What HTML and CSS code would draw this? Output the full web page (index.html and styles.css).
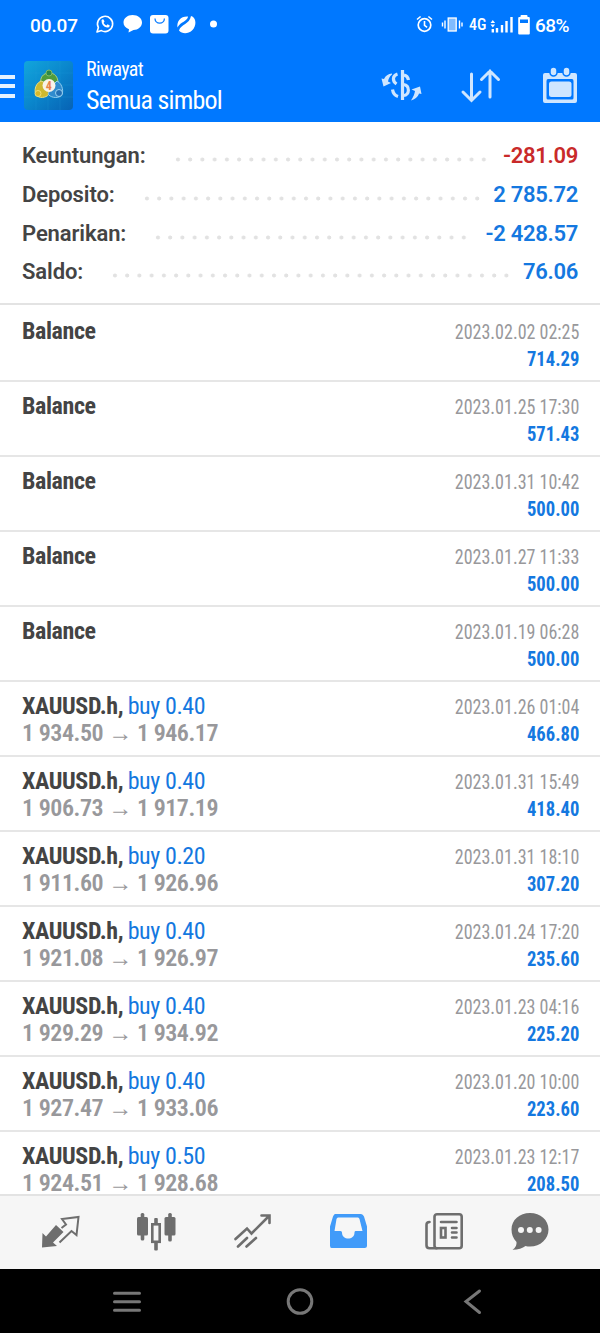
FILE: index.html
```html
<!DOCTYPE html>
<html lang="id">
<head>
    <meta charset="UTF-8" />
    <title>Riwayat</title>
    <link rel="stylesheet" href="styles.css">
</head>
<body>
    <div class="phone">
        <div class="status">
            <span class="clock">00.07</span>
            <svg class="notif" width="126" height="22" viewBox="0 0 126 22" fill="#fff">
                <path d="M2 19 L3.4 14.6 A7.6 7.6 0 1 1 6.4 17.6 Z" fill="none" stroke="#fff" stroke-width="1.6" stroke-linejoin="round"/>
                <path d="M6.500 7.200 q1.600-2 2.400 0 l.6 1.400 -.9 1.300 q1 1.800 2.800 2.500 l1.200-1.200 2.200 1.200 q-.2 2.400-2.700 2.200 Q6.500 13.400 6.500 7.200z"/>
                <path d="M37.500 2 C43 2 47 5.200 47 9.500 S43 17 38.500 17 L33.500 19.500 L34 16.300 C30.500 15 28.500 12.500 28.500 9.500 C28.500 5.200 32.500 2 37.500 2z"/>
                <rect x="55" y="2" width="18.500" height="18.500" rx="3"/>
                <path d="M60 5.500 a4.700 4.700 0 0 0 9.400 0" fill="none" stroke="#0a7cff" stroke-width="1.300"/>
                <path d="M82.500 14.500 C81.500 8 86 3 93 3.500 C93 8 85 9 82.500 14.500z"/>
                <path d="M84 17.500 C86 11 94.500 11.500 96 3 C101.500 4.500 102 13 97 17.500 C93 21 87 21 84 17.500z"/>
                <circle cx="118.500" cy="11" r="3.500"/>
            </svg>
            <svg class="signals" width="120" height="22" viewBox="0 0 120 22" fill="none" stroke="#fff">
                <circle cx="9.500" cy="12" r="6.300" stroke-width="1.700"/>
                <path d="M9.500 8v4.300l2.600 2M2 6.500l3.600-3M17 6.500l-3.600-3" stroke-width="1.600"/>
                <rect x="33.200" y="5" width="8" height="13" fill="#80bcff" stroke-width="1.300"/>
                <path d="M30 7.500v8M44.500 7.500v8M27.500 9.500v4M47 9.500v4" stroke-width="1.400"/>
                <text class="net" x="54" y="17">4G</text>
                <path d="M82 15v4.500M87 12v7.500M91.500 8v11.500M96.500 4v15.500" stroke-width="2.400"/>
                <path d="M75.500 10l2.300-3 2.300 3zM75.500 11.500l2.300 3 2.300-3z" fill="#fff" stroke="none"/>
                <path d="M77.800 16v3.500" stroke-width="2.400"/>
                <path d="M106.500 3h5v2h2.300v15.500h-9.600V5h2.300z" fill="#fff" stroke-width="2" stroke-linejoin="round"/>
                <rect x="105" y="6.500" width="8" height="3.500" fill="#0078ff" stroke="none"/>
            </svg>
            <span class="battery">68%</span>
        </div>
        <header class="header">
            <div class="menu"><i></i><i></i><i></i></div>
            <svg class="logo" width="49" height="49" viewBox="0 0 49 49">
                <defs>
                    <linearGradient id="sky" x1="0" y1="0" x2="1" y2="1">
                        <stop offset="0" stop-color="#12a6dc"/><stop offset=".5" stop-color="#0a86cc"/><stop offset="1" stop-color="#0762b4"/>
                    </linearGradient>
                </defs>
                <rect width="49" height="49" rx="4" fill="url(#sky)"/>
                <path d="M0 12h49M0 24h49M0 36h49M12 0v49M24 0v49M36 0v49" stroke="#2aa0dc" stroke-width=".5" opacity=".4"/>
                <path d="M25 12C19 12 15.500 17 17 23L25 25L34 22C34 16 31 12 25 12z" fill="#4f9c3c" stroke="#a9cf7c"/>
                <path d="M17 20C10 23 9 34 15 36C20 37.500 25 35 26 31L22 22z" fill="#cdb92f" stroke="#e6dd83"/>
                <path d="M33 20C39 23 40 32 37 35C32 38 26 36 24 33L28 25z" fill="#2f8bce" stroke="#8fcdee"/>
                <circle cx="25" cy="12" r="3" fill="#2c8748" stroke="#7dbb66"/>
                <circle cx="14" cy="32.500" r="3" fill="#d9b92a" stroke="#efe07a"/>
                <circle cx="35" cy="32" r="3.500" fill="#226fb4" stroke="#9ad3f2"/>
                <circle cx="25" cy="24.500" r="6.500" fill="#f8f3e8"/>
                <text class="four" x="21.800" y="29">4</text>
            </svg>
            <div class="titles">
                <div class="sub">Riwayat</div>
                <div class="title">Semua simbol</div>
            </div>
            <svg class="actions" width="200" height="40" viewBox="0 0 200 40" fill="none" stroke="#cfe6ff">
                <path d="M22.500 4v30" stroke-width="3.200"/>
                <path d="M17.500 8c-5 1.500-5.500 7-1 10M12.500 23.500c.5 3.500 2.500 6 5.500 7M24 9c2.500.5 4 2 4.500 5M23.500 18.500c6.500 1 6.500 10.500 0 11" stroke-width="3.200"/>
                <path d="M12 7.500c-4 .5-6.500 2-8 5.500l-2.500-.5 2 8 7.500-3.500-3-1.500c.5-3 1.500-5 4-7z" fill="#cfe6ff" stroke="none"/>
                <path d="M31 34.500c3.500-1 7-3.500 8-7l2.500.5-1.500-7.500-8.500 3 3.500 1.500c-.5 3-1.500 5.500-4 9.500z" fill="#cfe6ff" stroke="none"/>
                <path d="M91.500 8v26M83 26l8.500 8.500 8.500-8.500M110 31V5M101.500 13.500L110 5l8.500 8.500" stroke-width="3" stroke-linecap="round"/>
                <path d="M165 7h30q2 0 2 2v26q0 2-2 2h-30q-2 0-2-2V9q0-2 2-2zm3 6q-1.500 0-1.500 2v17q0 1.500 1.500 1.500h24q1.500 0 1.500-1.500V15q0-2-1.500-2z" fill="#cfe6ff" fill-rule="evenodd" stroke="none"/>
                <rect x="169" y="15.500" width="22.500" height="15.500" rx="2.500" fill="#cfe6ff" stroke="none"/>
                <g fill="#cfe6ff" stroke="#0078ff" stroke-width="1.500">
                    <rect x="170" y="1" width="7" height="9" rx="3.500"/>
                    <rect x="183" y="1" width="7" height="9" rx="3.500"/>
                </g>
            </svg>
        </header>
        <section class="summary">
            <div class="line"><b>Keuntungan:</b><i class="dots"></i><b class="loss">-281.09</b></div>
            <div class="line"><b>Deposito:</b><i class="dots"></i><b class="gain">2 785.72</b></div>
            <div class="line"><b>Penarikan:</b><i class="dots"></i><b class="gain">-2 428.57</b></div>
            <div class="line"><b>Saldo:</b><i class="dots"></i><b class="gain">76.06</b></div>
        </section>
        <main class="list">
            <div class="row"><div class="left"><b>Balance</b></div><div class="right"><span>2023.02.02 02:25</span><b>714.29</b></div></div>
            <div class="row"><div class="left"><b>Balance</b></div><div class="right"><span>2023.01.25 17:30</span><b>571.43</b></div></div>
            <div class="row"><div class="left"><b>Balance</b></div><div class="right"><span>2023.01.31 10:42</span><b>500.00</b></div></div>
            <div class="row"><div class="left"><b>Balance</b></div><div class="right"><span>2023.01.27 11:33</span><b>500.00</b></div></div>
            <div class="row"><div class="left"><b>Balance</b></div><div class="right"><span>2023.01.19 06:28</span><b>500.00</b></div></div>
            <div class="row"><div class="left"><div><b>XAUUSD.h,</b> <em>buy 0.40</em></div><div class="price">1 934.50 <u>→</u> 1 946.17</div></div><div class="right"><span>2023.01.26 01:04</span><b>466.80</b></div></div>
            <div class="row"><div class="left"><div><b>XAUUSD.h,</b> <em>buy 0.40</em></div><div class="price">1 906.73 <u>→</u> 1 917.19</div></div><div class="right"><span>2023.01.31 15:49</span><b>418.40</b></div></div>
            <div class="row"><div class="left"><div><b>XAUUSD.h,</b> <em>buy 0.20</em></div><div class="price">1 911.60 <u>→</u> 1 926.96</div></div><div class="right"><span>2023.01.31 18:10</span><b>307.20</b></div></div>
            <div class="row"><div class="left"><div><b>XAUUSD.h,</b> <em>buy 0.40</em></div><div class="price">1 921.08 <u>→</u> 1 926.97</div></div><div class="right"><span>2023.01.24 17:20</span><b>235.60</b></div></div>
            <div class="row"><div class="left"><div><b>XAUUSD.h,</b> <em>buy 0.40</em></div><div class="price">1 929.29 <u>→</u> 1 934.92</div></div><div class="right"><span>2023.01.23 04:16</span><b>225.20</b></div></div>
            <div class="row"><div class="left"><div><b>XAUUSD.h,</b> <em>buy 0.40</em></div><div class="price">1 927.47 <u>→</u> 1 933.06</div></div><div class="right"><span>2023.01.20 10:00</span><b>223.60</b></div></div>
            <div class="row"><div class="left"><div><b>XAUUSD.h,</b> <em>buy 0.50</em></div><div class="price">1 924.51 <u>→</u> 1 928.68</div></div><div class="right"><span>2023.01.23 12:17</span><b>208.50</b></div></div>
        </main>
        <nav class="tabs">
            <!-- quotes -->
            <svg width="40" height="40" viewBox="0 0 40 40">
                <path d="M2 36.500L2.500 22l3.500 3.500L16 14l7.500 7L13 31.500l4 3.500z" fill="#6e6e6e"/>
                <path d="M19.500 31.500L31.500 20l5 4L38.500 6 22 8l4 5.500-4.500 3.500" fill="none" stroke="#6e6e6e" stroke-width="2"/>
            </svg>
            <!-- charts -->
            <svg width="40" height="40" viewBox="0 0 40 40" fill="#6e6e6e">
                <rect x="1" y="6" width="11" height="18.500" rx="1.500"/><rect x="4.700" y="2" width="3.600" height="27.500" rx="1.500"/>
                <rect x="28.500" y="6" width="11" height="18.500" rx="1.500"/><rect x="32.200" y="2" width="3.600" height="28.500" rx="1.500"/>
                <rect x="18.200" y="7" width="3.600" height="7" rx="1"/><rect x="18.200" y="31" width="3.600" height="8.500" rx="1"/>
                <rect x="16.300" y="13.300" width="7.400" height="17.500" fill="none" stroke="#6e6e6e" stroke-width="2.600"/>
            </svg>
            <!-- trade -->
            <svg width="40" height="40" viewBox="0 0 40 40" fill="none" stroke="#6e6e6e" stroke-width="2.600" stroke-linecap="round">
                <path d="M3.500 28L15 17.500l4.500 5L37 5M29.500 4.500H37.500V12M6 35.500l9-8.500M14.500 35.500l9.500-8.500"/>
            </svg>
            <!-- history -->
            <svg width="40" height="40" viewBox="0 0 40 40">
                <path d="M7 3h26q2 0 3 2.500l3 10v19q0 2.500-2.500 2.500h-33Q2 37 2 34.500v-19l3-10Q6 3 7 3zm3 3.500Q9 6.500 8.500 8L6.500 20h6q1.500 0 1.500 1.500c0 8 12.500 8 12.500 0 0-1 .5-1.500 1.500-1.500h6.500L31.500 8q-.5-1.500-1.500-1.500z" fill="#419bf9" fill-rule="evenodd"/>
            </svg>
            <!-- news -->
            <svg width="40" height="40" viewBox="0 0 40 40" fill="none" stroke="#6e6e6e" stroke-width="2.600" stroke-linecap="round">
                <rect x="10.500" y="3.300" width="27.200" height="34" rx="2.500"/>
                <path d="M5.500 11q-3 0-3 3v20.300q0 3 3 3h7M17 11h15.500M28 17h4.500M28 21.500h4.500M28 26.500h4.500"/>
                <rect x="17" y="17" width="4.500" height="9.500"/>
            </svg>
            <!-- messages -->
            <svg width="40" height="40" viewBox="0 0 40 40">
                <path d="M20 2c10.500 0 18.500 7 18.500 16.500S30.500 35.500 20 35.500q-2.500 0-4.500-.5-4.500 3.700-13 3.700Q7 36 6.500 31 1.500 26 1.500 18.500C1.500 9 9.500 2 20 2z" fill="#6e6e6e"/>
                <g fill="#f6f6f6"><circle cx="11" cy="19" r="3"/><circle cx="19.800" cy="19" r="3"/><circle cx="28.600" cy="19" r="3"/></g>
            </svg>
        </nav>
        <div class="navbar">
            <svg width="28" height="28" viewBox="0 0 28 28"><path d="M1.500 5.300h25M1.500 13.800h25M1.500 22.300h25"/></svg>
            <svg width="28" height="28" viewBox="0 0 28 28"><circle cx="14" cy="13.500" r="11.800"/></svg>
            <svg width="28" height="28" viewBox="0 0 28 28"><path d="M20.500 3L7 13.500 20.500 24.500"/></svg>
        </div>
    </div>
</body>
</html>
```
FILE: styles.css
```css
body {
    margin: 0;
    background: #fff;
    font-family: 'Roboto Condensed', Roboto, sans-serif;
    font-stretch: 75%;
    color: #444;
}
.phone {
    height: 1333px;
    display: flex;
    flex-direction: column;
    overflow: hidden;
}
.phone > * {
    flex-shrink: 0;
}
.status {
    height: 50px;
    background: #0078ff;
    color: #fff;
    display: flex;
    align-items: center;
    font-family: Roboto, sans-serif;
    font-stretch: 100%;
    font-size: 19px;
    font-weight: 500;
    box-sizing: border-box;
    padding: 0 31px 0 30px;
}
.clock {
    width: 65px;
    letter-spacing: -0.1px;
}
.notif {
    margin-top: -2px;
}
.signals {
    margin: -2px 0 0 auto;
}
.net {
    font-size: 16px;
    font-stretch: 75%;
    fill: #fff;
    stroke: none;
}
.battery {
    width: 34px;
    letter-spacing: -0.5px;
}
.header {
    height: 72px;
    background: #0078ff;
    color: #fff;
    display: flex;
    align-items: center;
}
.menu {
    width: 15px;
    display: flex;
    flex-direction: column;
    gap: 5.500px;
}
.menu i {
    height: 4px;
    background: #e4f1ff;
}
.logo {
    margin: -1px 13px 0 9px;
}
.four {
    font-size: 12px;
    font-weight: 700;
    fill: #e8834a;
}
.titles {
    margin-top: -2px;
}
.sub {
    font-size: 20px;
    line-height: 30px;
    letter-spacing: -0.600px;
}
.title {
    font-size: 26px;
    line-height: 32px;
    letter-spacing: -0.800px;
}
.actions {
    margin: -1px 20px 0 auto;
}
.summary {
    height: 183px;
    box-sizing: border-box;
    padding: 14px 22px 0;
    border-bottom: 2px solid #e3e3e3;
    font-family: Roboto, sans-serif;
    font-stretch: 100%;
    font-size: 22px;
}
.line {
    display: flex;
    height: 38.800px;
    line-height: 40px;
}
.line b {
    font-weight: 600;
    letter-spacing: -0.100px;
}
.line .loss,
.line .gain {
    letter-spacing: -0.300px;
}
.dots {
    flex: 1;
    height: 5px;
    margin: 21px 13px 0 29px;
    background: radial-gradient(circle at 3px 2.500px, #e2e2e2 1.700px, transparent 2.300px) 0 0 / 12.240px 5px;
}
.loss {
    color: #c92a2a;
}
.gain {
    color: #1478e0;
}
.list {
    flex: 1 1 0 !important;
    overflow: hidden;
    min-height: 0;
}
.row {
    height: 75px;
    box-sizing: border-box;
    border-bottom: 2px solid #e6e6e6;
    padding: 11px 21px 0 22px;
    display: flex;
    justify-content: space-between;
    font-size: 24px;
    line-height: 27px;
}
.row:first-child {
    height: 77px;
    padding-top: 13px;
}
.left b,
.left em {
    letter-spacing: -0.400px;
}
.left em {
    font-style: normal;
    color: #1478e0;
    margin-left: -1px;
}
.price {
    color: #98989b;
    font-weight: 600;
    letter-spacing: -0.450px;
}
.price u {
    text-decoration: none;
}
.right {
    font-size: 20px;
    padding-top: 1px;
    display: flex;
    flex-direction: column;
    align-items: flex-end;
}
.right span {
    color: #98989b;
    transform: scaleX(0.9);
    transform-origin: right;
}
.right b {
    color: #1478e0;
    transform: scaleX(0.93);
    transform-origin: right;
}
.tabs {
    height: 75px;
    box-sizing: border-box;
    border-top: 2px solid #e3e3e3;
    background: #f6f6f6;
    display: grid;
    grid-template-columns: 96px 96px 96px 96px 96px 75px;
    padding: 0 0 4px 12px;
    place-items: center;
}
.navbar {
    height: 64px;
    box-sizing: border-box;
    background: #000;
    display: flex;
    justify-content: space-between;
    align-items: center;
    padding: 1px 113px 0;
}
.navbar svg {
    fill: none;
    stroke: #777;
    stroke-width: 3;
    stroke-linecap: round;
}
```
